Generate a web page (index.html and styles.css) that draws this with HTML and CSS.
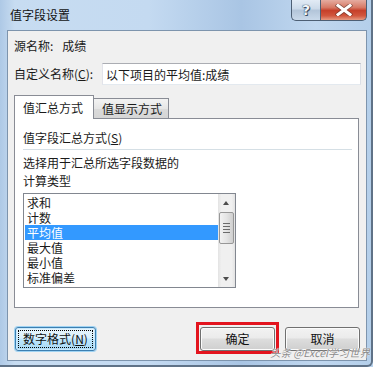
FILE: index.html
```html
<!DOCTYPE html>
<html lang="zh-CN">
<head>
  <meta charset="UTF-8" />
  <meta name="viewport" content="width=device-width, initial-scale=1.0"/>
  <title>值字段设置</title>
  <link rel="stylesheet" href="styles.css">
</head>
<body>

  <div class="window">
    <div class="titlebar">
      <span class="title">值字段设置</span>
      <div class="caption">
        <span class="cap help">?</span>
        <span class="cap close">
          <svg width="18" height="12" viewBox="0 0 18 12">
            <path d="M3 1.5 L15 10.5 M15 1.5 L3 10.5" stroke="#4a2a24" stroke-width="4.6" stroke-linecap="square" opacity="0.55"/>
            <path d="M3 1.5 L15 10.5 M15 1.5 L3 10.5" stroke="#fff" stroke-width="3" stroke-linecap="square"/>
          </svg>
        </span>
      </div>
    </div>

    <div class="client">
      <div class="row source">
        <span>源名称:</span>
        <span class="source-value">成绩</span>
      </div>

      <div class="row custom">
        <label class="custom-label" for="customName">自定义名称(<u>C</u>):</label>
        <input class="textbox" id="customName" type="text" value="以下项目的平均值:成绩" />
      </div>

      <div class="tabs">
        <div class="tab active">值汇总方式</div>
        <div class="tab">值显示方式</div>
      </div>

      <div class="panel">
        <div class="group-title">值字段汇总方式(<u>S</u>)</div>
        <div class="separator"></div>
        <div class="hint">选择用于汇总所选字段数据的<br>计算类型</div>

        <div class="listbox">
          <ul class="items">
            <li>求和</li>
            <li>计数</li>
            <li class="selected">平均值</li>
            <li>最大值</li>
            <li>最小值</li>
            <li>标准偏差</li>
          </ul>
          <div class="scrollbar">
            <div class="arrow up"></div>
            <div class="thumb">
              <span></span><span></span><span></span><span></span>
            </div>
            <div class="arrow down"></div>
          </div>
        </div>
      </div>

      <div class="buttons">
        <button class="btn focused"><span class="focus-rect">数字格式(<u>N</u>)</span></button>
        <button class="btn marked">确定</button>
        <button class="btn">取消</button>
      </div>
    </div>

    <div class="watermark">头条 @Excel学习世界</div>
  </div>

</body>
</html>
```

FILE: styles.css
```css
* {
  box-sizing: border-box;
}
body {
  margin: 0;
  font-family: "Noto Sans CJK SC", "Liberation Sans", sans-serif;
  font-size: 12px;
  color: #1a1a1a;
  background: #b8d2ec;
}
u {
  text-decoration: underline;
  text-underline-offset: 1px;
}
.window {
  position: relative;
  width: 373px;
  height: 367px;
  overflow: hidden;
  background: linear-gradient(90deg, #aec9e6 0%, #c7dcf1 4%, #c4daf1 40%, #a9c5e4 65%, #c0d7ef 85%, #b4cfea 100%);
  border-right: 2px solid #5f7287;
  border-bottom: 2px solid #5f7287;
  border-bottom-right-radius: 6px;
}
.titlebar {
  height: 30px;
  display: flex;
  justify-content: space-between;
  align-items: flex-start;
}
.title {
  margin: 6px 0 0 10px;
  line-height: 18px;
  color: #111;
}
.caption {
  display: flex;
  margin-right: 4px;
  margin-top: -1px;
}
.cap {
  height: 22px;
  border: 1px solid #4d5f74;
  border-top: none;
  display: flex;
  align-items: center;
  justify-content: center;
}
.help {
  width: 29px;
  border-right: none;
  border-bottom-left-radius: 5px;
  background: linear-gradient(#e4edf6 0%, #cddbea 45%, #b3c5d9 55%, #c9d9ea 100%);
  font-family: "DejaVu Sans", sans-serif;
  font-weight: bold;
  font-size: 14px;
  color: #f4f7fa;
  text-shadow: 0 0 1px #2c3d51, 0 0 1px #2c3d51, 1px 1px 0 #43556a;
}
.close {
  width: 47px;
  border-bottom-right-radius: 5px;
  background: linear-gradient(#e7b3a8 0%, #d77a66 40%, #c6402a 55%, #d2573e 80%, #e69a82 100%);
}
.client {
  width: 360px;
  height: 331px;
  margin-left: 7px;
  border: 1px solid #7d94ad;
  background: #f0f0f0;
  padding: 7px 7px 0 6px;
}
.row {
  display: flex;
  align-items: center;
}
.source {
  height: 16px;
  line-height: 16px;
}
.source-value {
  margin-left: 9px;
}
.custom {
  margin-top: 9px;
  height: 22px;
}
.custom-label {
  width: 88px;
  line-height: 16px;
}
.textbox {
  width: 259px;
  height: 22px;
  margin-right: -2px;
  border: 1px solid #abadb3;
  border-left-color: #e2e3ea;
  border-right-color: #dbdfe6;
  border-bottom-color: #e3e9ef;
  background: #fff;
  font: inherit;
  color: #1a1a1a;
  padding: 0 0 0 3px;
  line-height: 20px;
}
.tabs {
  display: flex;
  align-items: flex-start;
  margin-top: 10px;
  margin-bottom: -1px;
  height: 24px;
}
.tab {
  height: 20px;
  margin-top: 3px;
  width: 75px;
  border: 1px solid #898c95;
  border-bottom: none;
  border-left: none;
  background: linear-gradient(#f3f3f3, #e6e6e6 50%, #dadada 51%, #d6d6d6);
  line-height: 20px;
  padding-left: 8px;
}
.tab.active {
  position: relative;
  z-index: 1;
  width: 80px;
  height: 24px;
  margin-top: 0;
  border-left: 1px solid #898c95;
  background: #fff;
  line-height: 24px;
  padding-left: 8px;
}
.panel {
  height: 190px;
  border: 1px solid #898c95;
  background: #fff;
  padding: 11px 6px 0 8px;
}
.group-title {
  line-height: 16px;
}
.separator {
  height: 1px;
  margin-top: 3px;
  background: #d5dfe5;
}
.hint {
  margin-top: 4px;
  line-height: 18px;
}
.listbox {
  display: flex;
  width: 213px;
  height: 95px;
  margin-top: 3px;
  border: 1px solid #828790;
  background: #fff;
}
.items {
  flex: 1;
  list-style: none;
  margin: 0;
  padding: 1px 0 0 1px;
  overflow: hidden;
}
.items li {
  height: 15px;
  line-height: 15px;
  padding-left: 2px;
  overflow: hidden;
}
.items li.selected {
  background: #3399ff;
  color: #fff;
}
.scrollbar {
  width: 17px;
  display: flex;
  flex-direction: column;
  background: linear-gradient(90deg, #e3e3e3, #f0f0f0 20%, #f0f0f0 80%, #e3e3e3);
}
.arrow {
  height: 17px;
  position: relative;
}
.arrow.down {
  margin-top: auto;
}
.arrow::after {
  content: "";
  position: absolute;
  left: 5px;
  top: 7px;
  border-left: 3.5px solid transparent;
  border-right: 3.5px solid transparent;
}
.arrow.up::after {
  border-bottom: 4px solid #4d4d4d;
}
.arrow.down::after {
  border-top: 4px solid #4d4d4d;
}
.thumb {
  height: 32px;
  margin: 1px 1px 0;
  border: 1px solid #979797;
  border-radius: 2px;
  background: linear-gradient(90deg, #f2f2f2, #e4e4e4 50%, #cfcfcf);
  display: flex;
  flex-direction: column;
  justify-content: center;
  align-items: center;
  gap: 2px;
}
.thumb span {
  width: 7px;
  height: 1px;
  background: #6b6b6b;
}
.buttons {
  display: flex;
  align-items: flex-start;
  gap: 10px;
  margin-top: 19px;
  margin-right: -1px;
}
.btn {
  width: 75px;
  height: 24px;
  padding: 0;
  border: 1px solid #707070;
  border-radius: 3px;
  background: linear-gradient(#f2f2f2 0%, #ebebeb 45%, #dddddd 50%, #cfcfcf 100%);
  box-shadow: inset 0 0 0 1px #fbfbfb;
  font: inherit;
  color: #111;
  line-height: 20px;
}
.btn.focused {
  width: 81px;
  height: 24px;
  margin: 0 auto 0 1px;
  border-color: #3c7fb1;
  box-shadow: 0 0 0 1px #9fd3f3, inset 0 0 0 1px #c8e7fa;
  background: linear-gradient(#eaf6fd 0%, #d9f0fc 45%, #bee6fd 50%, #a7d9f5 100%);
  padding: 2px;
}
.focus-rect {
  display: block;
  height: 18px;
  line-height: 16px;
  border: 1px dotted #000;
}
.marked {
  position: relative;
}
.marked::before {
  content: "";
  position: absolute;
  left: -5px;
  right: -5px;
  top: -6px;
  bottom: -4px;
  border: 3px solid #e3141e;
}
.watermark {
  position: absolute;
  left: 270px;
  top: 346px;
  white-space: nowrap;
  font-size: 10.5px;
  font-style: italic;
  line-height: 14px;
  color: #8a8a8a;
  text-shadow: 0 0 1px #fff, 0 0 1px #fff;
}
```
